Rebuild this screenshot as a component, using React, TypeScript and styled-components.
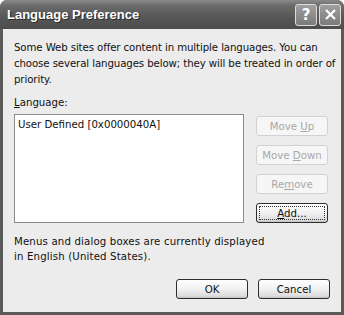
import React from "react";
import styled, { createGlobalStyle } from "styled-components";

const GlobalStyle = createGlobalStyle`
  html, body {
    margin: 0;
    padding: 0;
    background: #ffffff;
  }
  body {
    font-family: "DejaVu Sans", Verdana, sans-serif;
  }
`;

const Window = styled.div`
  width: 344px;
  height: 315px;
  box-sizing: border-box;
  display: flex;
  flex-direction: column;
  background: #5a5a5a;
  border-radius: 7px 7px 0 0;
  overflow: hidden;
`;

const TitleBar = styled.div`
  height: 29px;
  flex-shrink: 0;
  display: flex;
  align-items: center;
  justify-content: space-between;
  padding: 0 3px 0 7px;
  background: linear-gradient(to bottom, #8a8a8a 0%, #6a6a6a 20%, #565656 60%, #4c4c4c 100%);
`;

const Title = styled.div`
  color: #ffffff;
  font-family: "Liberation Sans", Arial, sans-serif;
  font-weight: bold;
  font-size: 13px;
  text-shadow: 1px 1px 0 #2a2a2a;
`;

const Caption = styled.div`
  display: flex;
  gap: 2px;
`;

const CaptionButton = styled.div`
  width: 22px;
  height: 22px;
  box-sizing: border-box;
  border: 1px solid #dcdcdc;
  border-radius: 3px;
  background: linear-gradient(to bottom, #a0a0a0, #7a7a7a);
  display: flex;
  align-items: center;
  justify-content: center;
  color: #ffffff;
  font-family: "DejaVu Sans", sans-serif;
  font-weight: bold;
  font-size: 15px;
`;

const Body = styled.div`
  flex: 1;
  margin: 0 3px 3px 3px;
  background: #ececec;
  padding: 11px 11px 0 11px;
  display: flex;
  flex-direction: column;
  font-size: 10.2px;
  color: #111111;
`;

const Description = styled.p`
  margin: 0;
  line-height: 16px;
  white-space: nowrap;
  letter-spacing: -0.1px;
`;

const FieldLabel = styled.div`
  margin-top: 7px;
  margin-bottom: 3px;
  line-height: 16px;
`;

const Row = styled.div`
  display: flex;
  gap: 12px;
`;

const ListBox = styled.div`
  width: 230px;
  height: 109px;
  box-sizing: border-box;
  background: #ffffff;
  border: 1px solid #8c8c8c;
  padding: 2px 3px;
  line-height: 15px;
`;

const ButtonColumn = styled.div`
  display: flex;
  flex-direction: column;
  gap: 9px;
  padding-top: 2px;
`;

const Button = styled.button<{ $disabled?: boolean; $focused?: boolean }>`
  width: 72px;
  height: 20px;
  box-sizing: border-box;
  padding: 0;
  font-family: "DejaVu Sans", Verdana, sans-serif;
  font-size: 10.2px;
  border-radius: 3px;
  color: ${(p) => (p.$disabled ? "#a8a8a8" : "#111111")};
  border: 1px solid ${(p) => (p.$disabled ? "#d2d2d2" : "#2e2e2e")};
  background: ${(p) =>
    p.$disabled
      ? "#f6f6f6"
      : "linear-gradient(to bottom, #ffffff 0%, #f1f1f1 50%, #dcdcdc 90%, #bdbdbd 100%)"};
  outline: ${(p) => (p.$focused ? "1px dotted #333333" : "none")};
  outline-offset: -4px;
`;

const Info = styled.p`
  margin: 11px 0 0 0;
  line-height: 15px;
  letter-spacing: 0.15px;
`;

const Footer = styled.div`
  display: flex;
  justify-content: flex-end;
  gap: 10px;
  margin-top: 15px;
`;

const App = () => {
  return (
    <>
      <GlobalStyle />
      <Window>
        <TitleBar>
          <Title>Language Preference</Title>
          <Caption>
            <CaptionButton>?</CaptionButton>
            <CaptionButton>
              <svg width="13" height="13" viewBox="0 0 13 13">
                <path d="M2 2 L11 11 M11 2 L2 11" stroke="#ffffff" strokeWidth="2.2" />
              </svg>
            </CaptionButton>
          </Caption>
        </TitleBar>
        <Body>
          <Description>
            Some Web sites offer content in multiple languages. You can
            <br />
            choose several languages below; they will be treated in order of
            <br />
            priority.
          </Description>
          <FieldLabel>
            <u>L</u>anguage:
          </FieldLabel>
          <Row>
            <ListBox>User Defined [0x0000040A]</ListBox>
            <ButtonColumn>
              <Button $disabled>
                Move <u>U</u>p
              </Button>
              <Button $disabled>
                Move <u>D</u>own
              </Button>
              <Button $disabled>
                Re<u>m</u>ove
              </Button>
              <Button $focused>
                <u>A</u>dd...
              </Button>
            </ButtonColumn>
          </Row>
          <Info>
            Menus and dialog boxes are currently displayed
            <br />
            in English (United States).
          </Info>
          <Footer>
            <Button>OK</Button>
            <Button>Cancel</Button>
          </Footer>
        </Body>
      </Window>
    </>
  );
};

export default App;
